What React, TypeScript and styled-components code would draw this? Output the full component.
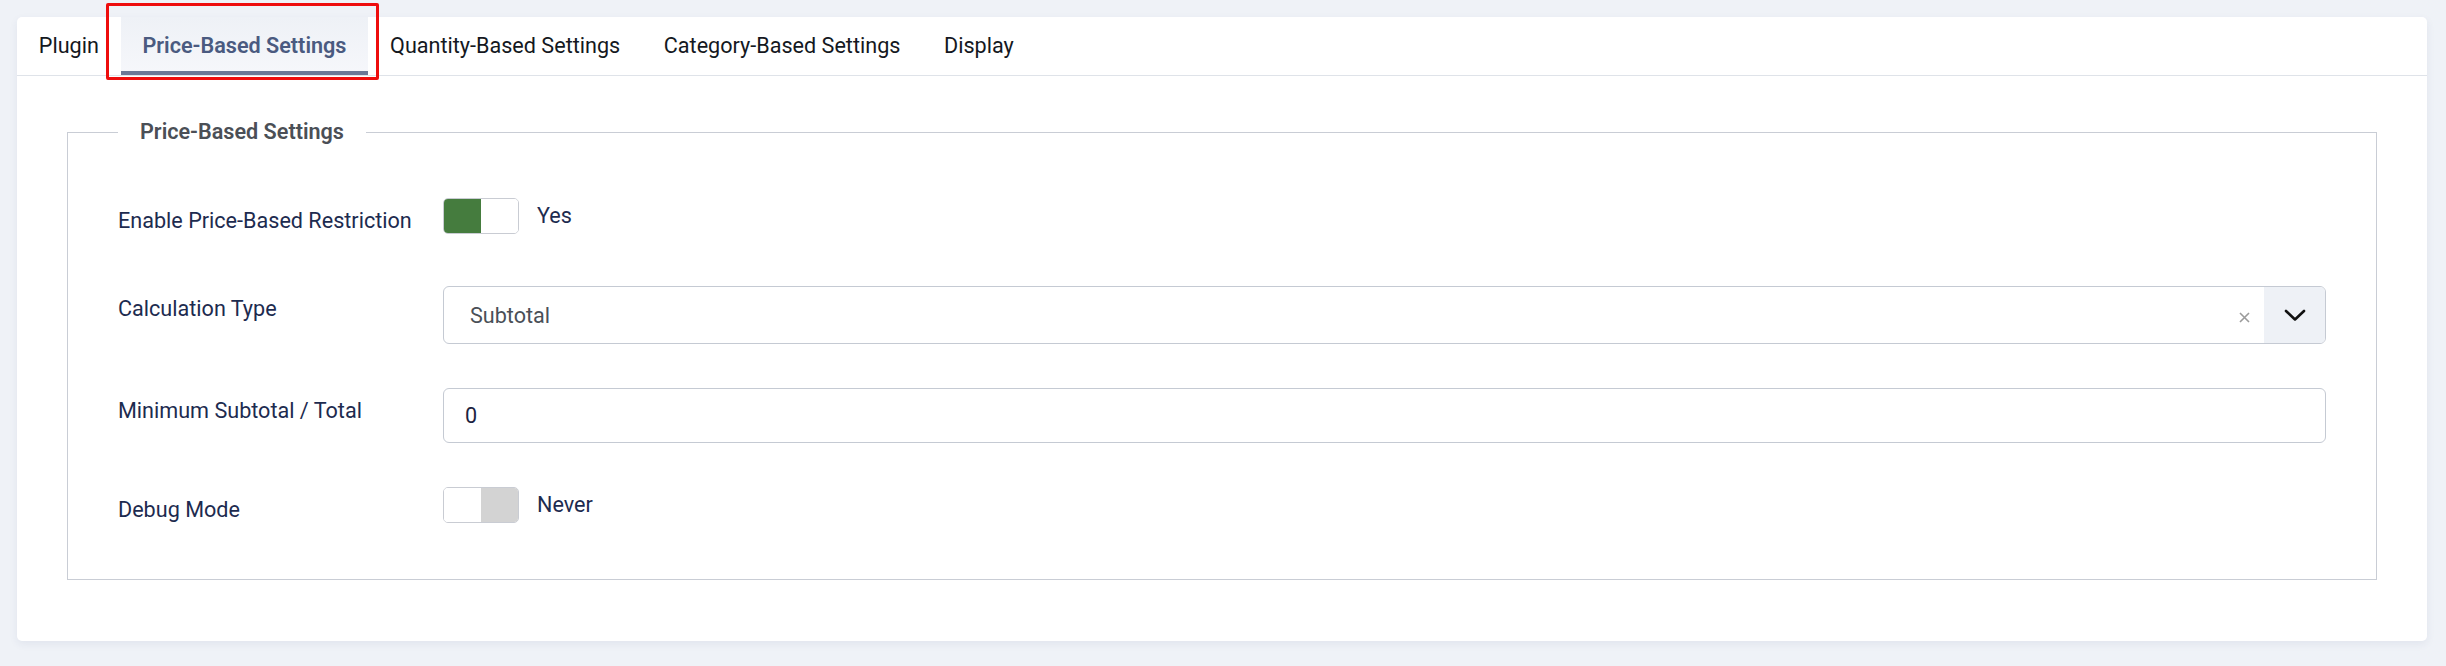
import styled, { createGlobalStyle } from 'styled-components'

const GlobalStyle = createGlobalStyle`
    html, body {
        margin: 0;
        padding: 0;
        background: #eff2f7;
    }
    body {
        font-family: Roboto, "Liberation Sans", Arial, sans-serif;
        font-size: 21.6px;
        color: #1d2b4f;
    }
`

const Page = styled.div`
    padding: 17px 19px 25px 17px;
`

const Card = styled.div`
    background: #fff;
    border-radius: 5px;
    box-shadow: 0 3px 8px rgba(40, 60, 110, 0.07);
`

const TabBar = styled.div`
    display: flex;
    border-bottom: 1px solid #dfe3e9;
`

const Tab = styled.div<{ $active?: boolean }>`
    position: relative;
    padding: 13px 21.8px;
    line-height: 32px;
    white-space: nowrap;
    cursor: pointer;
    color: ${props => props.$active ? '#4a5a80' : '#141821'};
    font-weight: ${props => props.$active ? 600 : 400};
    background: ${props => props.$active ? 'linear-gradient(#eef1f6, #f6f7fb)' : 'transparent'};
    box-shadow: ${props => props.$active ? 'inset 0 -4px 0 #6b7897' : 'none'};
`

// red outline drawn over the selected tab
const Highlight = styled.span`
    position: absolute;
    top: -14px;
    left: -15px;
    right: -11px;
    bottom: -5px;
    border: 3px solid #ee0d0d;
    border-radius: 2px;
    pointer-events: none;
`

const CardBody = styled.div`
    padding: 40px 50px 61px;
`

const Fieldset = styled.fieldset`
    margin: 0;
    min-width: 0;
    padding: 50px 50px 48px;
    border: 1px solid #c9cdd5;
`

const Legend = styled.legend`
    padding: 0 22px;
    line-height: 32px;
    font-weight: 600;
    color: #4b4f56;
`

const ControlGroup = styled.div`
    display: grid;
    grid-template-columns: 325px 1fr;
    align-items: start;
    margin-bottom: 44px;

    &:last-child {
        margin-bottom: 0;
    }
`

const Label = styled.label`
    padding-top: 7px;
    line-height: 32px;
    color: #1d2b4f;
`

const SwitchRow = styled.div`
    display: flex;
    align-items: center;
    gap: 18px;
    padding-bottom: 8px;
`

const Switch = styled.div`
    display: flex;
    width: 76px;
    height: 36px;
    box-sizing: border-box;
    border: 1px solid #c9ccd3;
    border-radius: 5px;
    overflow: hidden;
`

const SwitchHalf = styled.span<{ $fill?: string }>`
    flex: 1;
    background: ${props => props.$fill || '#fff'};
`

const SwitchText = styled.span`
    line-height: 32px;
    color: #1d2b4f;
`

const Select = styled.div`
    display: flex;
    align-items: stretch;
    height: 58px;
    box-sizing: border-box;
    border: 1px solid #c5cad3;
    border-radius: 6px;
    overflow: hidden;
`

const SelectValue = styled.div`
    flex: 1;
    display: flex;
    align-items: center;
    padding-left: 26px;
    color: #4a4f57;
`

const ClearButton = styled.div`
    display: flex;
    align-items: center;
    justify-content: center;
    width: 40px;
    padding-top: 4px;
`

const Caret = styled.div`
    display: flex;
    align-items: center;
    justify-content: center;
    width: 61px;
    background: #eef1f6;
`

const TextInput = styled.div`
    display: flex;
    align-items: center;
    height: 55px;
    box-sizing: border-box;
    padding-left: 21px;
    border: 1px solid #c5cad3;
    border-radius: 6px;
    color: #1c2340;
`

const Toggle = ({ on, text }: { on: boolean; text: string }) => (
    <SwitchRow>
        <Switch>
            <SwitchHalf $fill={on ? '#457c3e' : '#fff'} />
            <SwitchHalf $fill={on ? '#fff' : '#d3d3d3'} />
        </Switch>
        <SwitchText>{text}</SwitchText>
    </SwitchRow>
)

const tabs = ['Plugin', 'Price-Based Settings', 'Quantity-Based Settings', 'Category-Based Settings', 'Display']

export default function App() {
    return (
        <>
            <GlobalStyle />
            <Page>
                <Card>
                    <TabBar>
                        {tabs.map(t => (
                            <Tab key={t} $active={t === 'Price-Based Settings'}>
                                {t}
                                {t === 'Price-Based Settings' && <Highlight />}
                            </Tab>
                        ))}
                    </TabBar>
                    <CardBody>
                        <Fieldset>
                            <Legend>Price-Based Settings</Legend>

                            <ControlGroup>
                                <Label>Enable Price-Based Restriction</Label>
                                <Toggle on text="Yes" />
                            </ControlGroup>

                            <ControlGroup>
                                <Label>Calculation Type</Label>
                                <Select>
                                    <SelectValue>Subtotal</SelectValue>
                                    <ClearButton>
                                        <svg width="11" height="11" viewBox="0 0 11 11">
                                            <path d="M1 1 L10 10 M10 1 L1 10" stroke="#9b9b9b" strokeWidth="1.6" />
                                        </svg>
                                    </ClearButton>
                                    <Caret>
                                        <svg width="22" height="13" viewBox="0 0 22 13">
                                            <path d="M2 2 L11 10.5 L20 2" fill="none" stroke="#111" strokeWidth="2.6" strokeLinecap="round" strokeLinejoin="round" />
                                        </svg>
                                    </Caret>
                                </Select>
                            </ControlGroup>

                            <ControlGroup>
                                <Label>Minimum Subtotal / Total</Label>
                                <TextInput>0</TextInput>
                            </ControlGroup>

                            <ControlGroup>
                                <Label>Debug Mode</Label>
                                <Toggle on={false} text="Never" />
                            </ControlGroup>
                        </Fieldset>
                    </CardBody>
                </Card>
            </Page>
        </>
    )
}
